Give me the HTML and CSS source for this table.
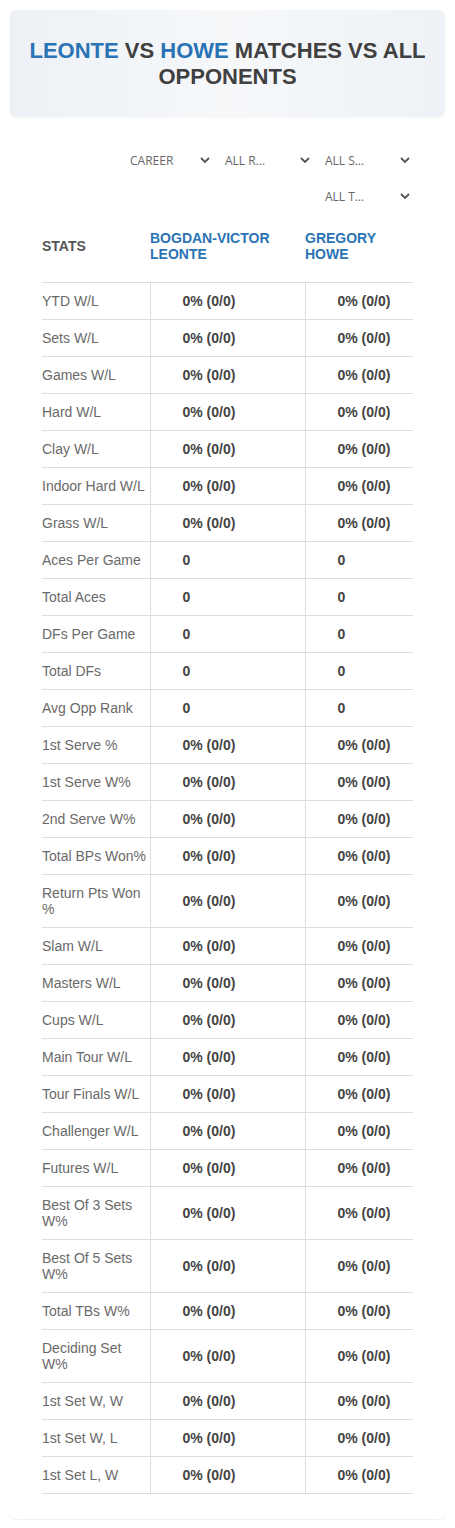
FILE: index.html
```html
<!DOCTYPE html>
<html>
<head>
<meta charset="utf-8">
<link rel="stylesheet" href="styles.css">
</head>
<body>
<header class="hero">
  <h1 class="title"><span class="blue">LEONTE</span> VS <span class="blue">HOWE</span> MATCHES VS ALL OPPONENTS</h1>
</header>
<section class="card">
  <div class="filters">
    <div class="select w80"><span>CAREER</span><svg class="chev" viewBox="0 0 10 6" width="10" height="6"><path d="M1 1l4 4 4-4" fill="none" stroke="#555" stroke-width="1.8"/></svg></div>
    <div class="select"><span>ALL R…</span><svg class="chev" viewBox="0 0 10 6" width="10" height="6"><path d="M1 1l4 4 4-4" fill="none" stroke="#555" stroke-width="1.8"/></svg></div>
    <div class="select"><span>ALL S…</span><svg class="chev" viewBox="0 0 10 6" width="10" height="6"><path d="M1 1l4 4 4-4" fill="none" stroke="#555" stroke-width="1.8"/></svg></div>
    <div class="select"><span>ALL T…</span><svg class="chev" viewBox="0 0 10 6" width="10" height="6"><path d="M1 1l4 4 4-4" fill="none" stroke="#555" stroke-width="1.8"/></svg></div>
  </div>
  <table class="stats">
    <colgroup><col class="c1"><col class="c2"><col class="c3"></colgroup>
    <thead>
      <tr><th class="h-stats">STATS</th><th class="h-name">BOGDAN-VICTOR LEONTE</th><th class="h-name">GREGORY HOWE</th></tr>
    </thead>
    <tbody>
      <tr><td>YTD W/L</td><td>0% (0/0)</td><td>0% (0/0)</td></tr>
      <tr><td>Sets W/L</td><td>0% (0/0)</td><td>0% (0/0)</td></tr>
      <tr><td>Games W/L</td><td>0% (0/0)</td><td>0% (0/0)</td></tr>
      <tr><td>Hard W/L</td><td>0% (0/0)</td><td>0% (0/0)</td></tr>
      <tr><td>Clay W/L</td><td>0% (0/0)</td><td>0% (0/0)</td></tr>
      <tr><td>Indoor Hard W/L</td><td>0% (0/0)</td><td>0% (0/0)</td></tr>
      <tr><td>Grass W/L</td><td>0% (0/0)</td><td>0% (0/0)</td></tr>
      <tr><td>Aces Per Game</td><td>0</td><td>0</td></tr>
      <tr><td>Total Aces</td><td>0</td><td>0</td></tr>
      <tr><td>DFs Per Game</td><td>0</td><td>0</td></tr>
      <tr><td>Total DFs</td><td>0</td><td>0</td></tr>
      <tr><td>Avg Opp Rank</td><td>0</td><td>0</td></tr>
      <tr><td>1st Serve %</td><td>0% (0/0)</td><td>0% (0/0)</td></tr>
      <tr><td>1st Serve W%</td><td>0% (0/0)</td><td>0% (0/0)</td></tr>
      <tr><td>2nd Serve W%</td><td>0% (0/0)</td><td>0% (0/0)</td></tr>
      <tr><td>Total BPs Won%</td><td>0% (0/0)</td><td>0% (0/0)</td></tr>
      <tr><td>Return Pts Won %</td><td>0% (0/0)</td><td>0% (0/0)</td></tr>
      <tr><td>Slam W/L</td><td>0% (0/0)</td><td>0% (0/0)</td></tr>
      <tr><td>Masters W/L</td><td>0% (0/0)</td><td>0% (0/0)</td></tr>
      <tr><td>Cups W/L</td><td>0% (0/0)</td><td>0% (0/0)</td></tr>
      <tr><td>Main Tour W/L</td><td>0% (0/0)</td><td>0% (0/0)</td></tr>
      <tr><td>Tour Finals W/L</td><td>0% (0/0)</td><td>0% (0/0)</td></tr>
      <tr><td>Challenger W/L</td><td>0% (0/0)</td><td>0% (0/0)</td></tr>
      <tr><td>Futures W/L</td><td>0% (0/0)</td><td>0% (0/0)</td></tr>
      <tr><td>Best Of 3 Sets W%</td><td>0% (0/0)</td><td>0% (0/0)</td></tr>
      <tr><td>Best Of 5 Sets W%</td><td>0% (0/0)</td><td>0% (0/0)</td></tr>
      <tr><td>Total TBs W%</td><td>0% (0/0)</td><td>0% (0/0)</td></tr>
      <tr><td>Deciding Set W%</td><td>0% (0/0)</td><td>0% (0/0)</td></tr>
      <tr><td>1st Set W, W</td><td>0% (0/0)</td><td>0% (0/0)</td></tr>
      <tr><td>1st Set W, L</td><td>0% (0/0)</td><td>0% (0/0)</td></tr>
      <tr><td>1st Set L, W</td><td>0% (0/0)</td><td>0% (0/0)</td></tr>
    </tbody>
  </table>
</section>
</body>
</html>
```
FILE: styles.css
```css
* { box-sizing: border-box; }
body {
  margin: 0;
  padding: 10px 10px 10px;
  background: #fff;
  font-family: "Liberation Sans", Arial, sans-serif;
}
.hero {
  height: 107px;
  border-radius: 6px;
  background: linear-gradient(90deg, #edf1f5 0%, #f6f8fa 50%, #eef2f6 100%);
  box-shadow: 0 1px 2px rgba(0,0,0,0.04);
  display: flex;
  align-items: center;
  justify-content: center;
  padding: 0 12px;
}
.title {
  margin: 0;
  text-align: center;
  font-size: 22px;
  line-height: 26px;
  font-weight: bold;
  color: #404040;
}
.blue { color: #2a73b5; }
.card {
  margin-top: 10px;
  background: #fff;
  border-radius: 6px;
  box-shadow: 0 1px 2px rgba(0,0,0,0.07);
  padding: 19px 32px 25px;
}
.filters {
  display: flex;
  flex-wrap: wrap;
  justify-content: flex-end;
  column-gap: 15px;
  row-gap: 8px;
  padding-right: 3px;
}
.select {
  width: 85px;
  height: 28px;
  display: flex;
  align-items: center;
  justify-content: space-between;
  font-family: "Open Sans", sans-serif;
  font-size: 12px;
  color: #666;
}
.select.w80 { width: 80px; }
.chev { display: block; }
.stats {
  width: 100%;
  table-layout: fixed;
  border-collapse: collapse;
  margin-top: 0;
}
.c1 { width: 108px; }
.c2 { width: 155px; }
.c3 { width: 108px; }
.stats th {
  text-align: left;
  font-size: 14px;
  line-height: 16px;
  font-weight: bold;
  padding: 20px 0 20px;
  vertical-align: middle;
  border-bottom: 1px solid #ddd;
}
.h-stats { color: #555; }
.h-name { color: #2a73b5; }
.stats td {
  font-size: 14px;
  line-height: 16px;
  padding: 10px 0 10px;
  border-bottom: 1px solid #ddd;
  vertical-align: middle;
}
.stats td:first-child {
  color: #6a6a6a;
  padding-right: 2px;
}
.stats td + td {
  border-left: 1px solid #ddd;
  padding-left: 32px;
  font-weight: bold;
  color: #444;
}
```
